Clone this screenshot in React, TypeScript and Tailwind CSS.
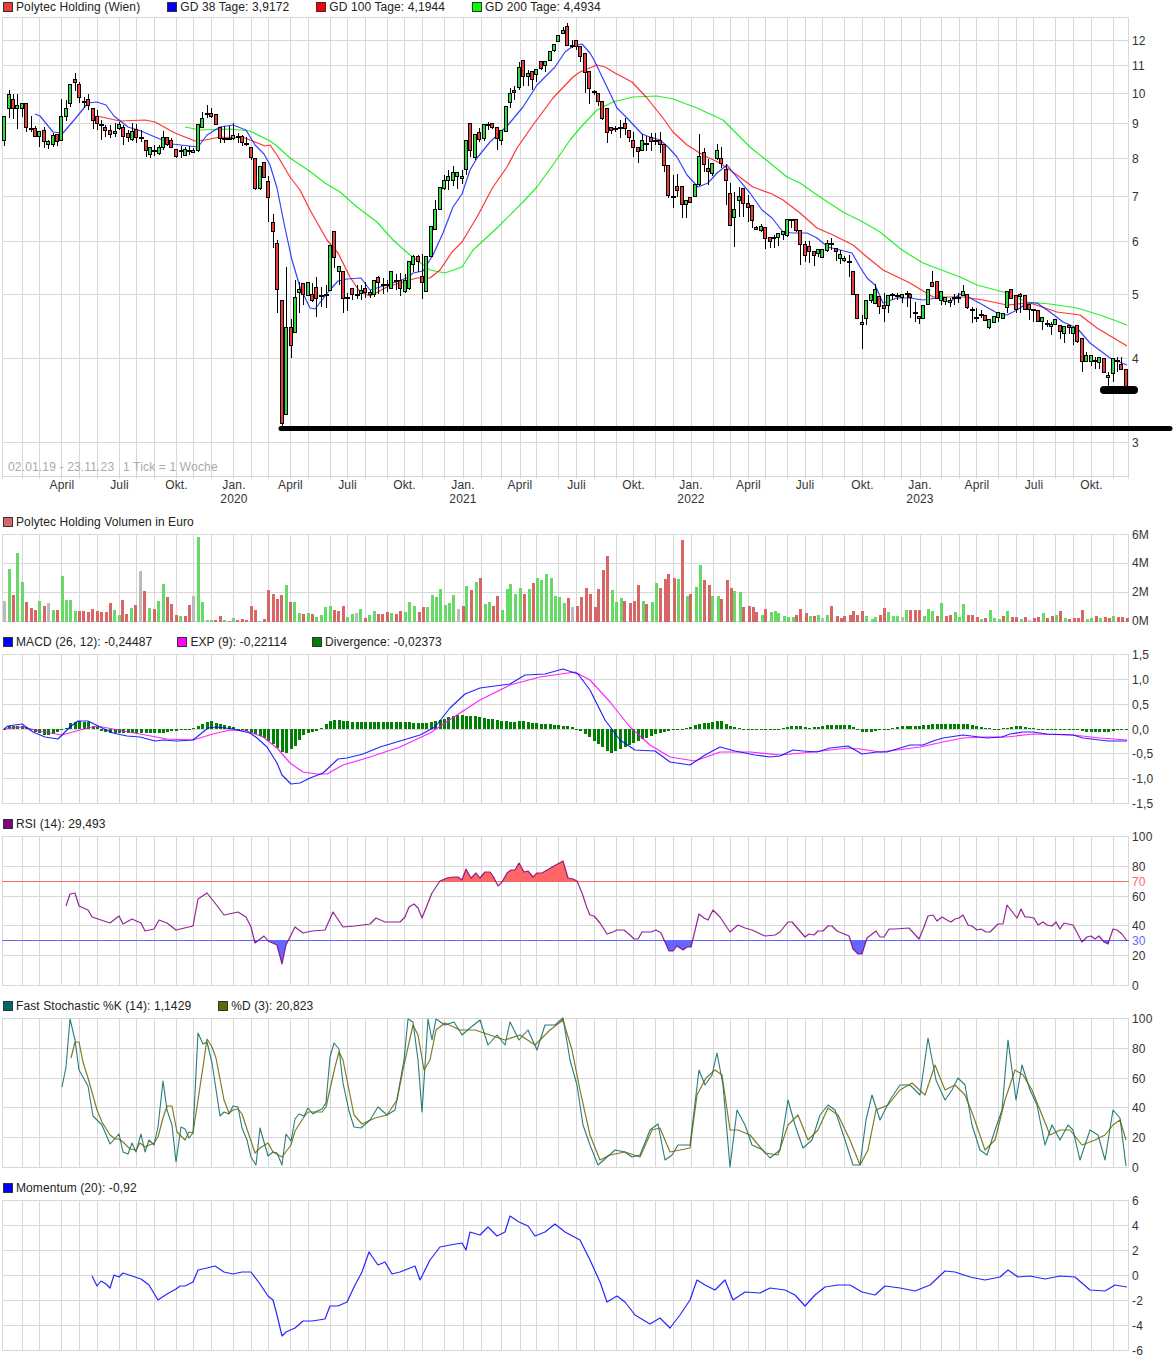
import React from "react";

type Candle = [number, number, number, number, number, number];
type Bar = [number, number, number];

const GRID_X = [
  2.5, 22.5, 39.5, 61.5, 79.5, 97.5, 119.5, 136.5, 154.5, 176.5, 193.5, 211.5, 233.5, 251.5, 268.5, 290.5, 308.5, 330.5,
  347.5, 365.5, 387.5, 404.5, 422.5, 444.5, 463.5, 481.5, 501.5, 520.5, 536.5, 558.5, 576.5, 594.5, 616.5, 633.5, 655.5,
  673.5, 691.5, 713.5, 730.5, 748.5, 765.5, 787.5, 805.5, 822.5, 844.5, 862.5, 884.5, 901.5, 920.5, 941.5, 959.5, 976.5,
  998.5, 1016.5, 1033.5, 1055.5, 1073.5, 1091.5, 1113.5, 1128.5,
];

const MONTHS: [number, string, string?][] = [
  [62, "April"], [119.5, "Juli"], [176.5, "Okt."], [234, "Jan.", "2020"], [290.5, "April"], [347.5, "Juli"], [404.5, "Okt."],
  [463, "Jan.", "2021"], [520, "April"], [576.5, "Juli"], [633.5, "Okt."], [691, "Jan.", "2022"], [748.5, "April"], [805, "Juli"],
  [862.5, "Okt."], [920, "Jan.", "2023"], [977, "April"], [1034, "Juli"], [1091.5, "Okt."],
];

// x, body top, body bottom, high, low, green?
const CANDLES: Candle[] = [
  [4,116,140,116,146,1],[9,94,108,90,118,1],[13,99,108,94,119,0],[17,105,108,94,129,1],[22,103,108,103,117,1],[26,103,127,103,132,0],
  [31,128,128,116,132,0],[35,128,136,126,136,0],[39,131,136,131,147,1],[44,130,141,127,148,0],[48,141,144,140,149,1],[53,135,144,133,147,1],
  [57,134,141,134,146,0],[61,116,140,99,141,1],[66,108,116,100,121,1],[70,84,103,84,107,1],[75,79,82,73,91,0],[79,84,97,82,103,0],
  [84,101,101,97,108,0],[88,99,105,94,110,0],[93,108,120,108,129,0],[97,116,123,110,130,0],[101,124,124,120,140,0],[105,127,130,125,137,0],
  [110,130,134,125,138,0],[115,131,133,123,137,1],[119,124,128,122,130,1],[123,127,136,125,145,0],[128,133,137,130,142,0],[132,131,139,123,141,1],
  [136,129,137,124,143,0],[141,137,137,130,142,0],[146,140,150,140,157,0],[150,147,154,147,158,1],[154,150,150,145,156,0],[159,147,153,145,155,1],
  [163,137,147,131,150,1],[167,137,144,137,146,0],[171,140,147,138,147,0],[176,149,156,149,158,0],[181,150,150,146,158,0],[185,149,155,147,156,1],
  [189,150,150,146,155,0],[193,150,152,148,153,1],[198,124,150,124,152,1],[202,118,127,112,127,1],[207,113,113,105,118,0],[211,113,116,108,118,0],
  [216,114,124,114,125,0],[220,127,138,127,143,0],[224,138,138,126,143,0],[229,138,138,126,139,0],[233,135,138,123,140,1],[238,136,136,133,143,0],
  [242,136,142,135,146,0],[246,143,143,137,146,0],[251,147,157,147,160,0],[255,158,188,158,190,0],[260,166,188,166,190,1],[264,162,177,162,177,0],
  [268,181,197,176,222,0],[273,222,231,214,248,0],[277,243,289,240,313,0],[282,300,423,300,426,0],[286,327,414,267,414,1],[291,327,345,319,358,0],
  [295,297,332,280,332,1],[299,289,292,282,313,1],[303,283,294,283,305,0],[308,282,295,282,295,1],[312,294,300,283,302,0],[316,287,298,277,317,0],
  [321,295,295,287,307,0],[326,294,294,285,308,0],[330,245,290,245,290,1],[334,231,257,231,268,0],[339,266,271,266,285,1],[343,271,298,271,313,0],
  [347,297,297,293,311,0],[352,288,294,288,300,0],[357,294,294,285,299,0],[361,290,293,285,300,1],[365,288,292,282,298,0],[370,292,294,290,298,1],
  [374,280,294,280,297,1],[378,277,282,276,294,0],[383,284,284,278,294,0],[387,284,284,280,292,0],[391,271,288,271,288,1],[396,280,280,274,290,0],
  [400,280,288,273,296,0],[405,280,291,274,293,1],[409,261,288,261,290,1],[413,256,264,255,272,1],[418,256,261,255,272,0],[422,276,282,254,299,0],
  [426,256,291,256,291,1],[431,226,256,226,256,1],[435,209,229,200,229,1],[440,187,209,187,209,1],[444,180,188,175,190,1],[448,176,180,170,190,1],
  [453,172,180,166,186,1],[457,172,176,172,189,1],[462,176,178,170,184,1],[466,140,169,140,175,1],[470,123,150,123,157,0],[475,134,157,134,160,1],
  [479,132,139,128,142,0],[484,124,138,124,141,1],[488,124,124,122,130,0],[492,123,127,123,129,0],[497,127,138,127,150,0],[501,130,140,130,145,1],
  [506,106,131,106,131,1],[510,93,102,88,108,1],[514,90,92,86,100,0],[519,67,87,62,90,1],[523,60,76,60,86,0],[528,73,76,70,86,1],
  [532,71,79,71,90,0],[536,69,74,69,82,1],[541,61,68,61,70,0],[545,61,65,61,72,1],[550,51,60,51,61,1],[554,44,50,44,52,1],
  [558,35,41,35,42,1],[563,30,33,27,34,1],[567,26,45,23,45,0],[572,45,45,40,48,0],[576,40,46,40,50,0],[580,46,56,46,62,0],
  [585,53,72,53,93,0],[589,71,88,71,104,0],[594,91,91,90,95,0],[598,93,101,93,106,0],[602,101,118,101,120,0],[607,108,132,108,143,0],
  [611,127,130,127,134,0],[615,128,128,126,132,0],[620,127,127,120,138,0],[625,123,128,118,135,0],[629,130,137,130,142,0],[633,140,147,132,157,0],
  [638,147,151,147,163,0],[642,140,150,134,151,1],[646,143,143,136,151,0],[651,137,141,133,151,0],[655,140,140,133,145,0],[660,140,144,132,153,0],
  [664,144,165,144,172,0],[668,165,195,165,198,0],[673,196,196,175,208,0],[677,186,190,174,197,0],[682,186,204,186,218,0],[686,200,204,200,218,1],
  [690,197,202,197,203,0],[695,184,196,184,196,1],[699,156,184,134,186,1],[704,152,164,148,172,0],[708,168,171,159,185,0],[712,163,173,163,176,1],
  [717,150,158,144,160,1],[721,158,163,147,168,0],[726,169,180,164,205,0],[730,193,225,183,225,0],[734,209,217,192,247,1],[739,196,200,187,217,1],
  [743,188,203,188,217,0],[748,203,207,195,222,0],[752,205,220,205,228,0],[756,227,229,226,230,0],[761,226,230,224,232,1],[765,227,238,227,249,0],
  [770,237,241,237,248,0],[774,237,238,235,248,1],[778,233,237,233,246,1],[783,231,234,231,240,1],[787,219,235,219,237,1],[791,219,219,219,228,0],
  [796,219,230,219,232,0],[800,230,244,230,265,0],[805,244,255,241,262,0],[809,246,251,241,263,0],[814,251,255,251,266,0],[818,249,253,249,257,1],
  [822,249,257,249,258,1],[827,243,250,240,252,1],[831,243,243,238,250,0],[836,248,251,248,261,0],[840,254,258,250,264,1],[844,258,260,256,262,1],
  [849,261,261,255,277,0],[853,271,294,271,295,0],[857,294,318,294,319,0],[862,322,324,315,349,1],[866,300,318,300,325,1],[871,294,300,294,303,1],
  [875,289,303,284,303,1],[879,296,306,296,314,0],[884,305,308,293,322,0],[888,295,305,295,313,1],[892,294,294,293,300,0],[897,295,295,293,300,0],
  [902,294,297,294,303,1],[907,293,293,291,307,0],[910,294,297,293,318,0],[915,312,312,302,322,0],[919,316,318,316,324,0],[923,305,318,305,318,1],
  [928,289,304,289,304,1],[932,282,286,271,286,0],[937,281,298,281,298,0],[941,291,300,291,305,1],[945,297,301,297,305,1],[950,300,302,298,307,1],
  [954,297,297,294,305,0],[958,297,297,293,303,0],[963,291,295,285,295,1],[967,294,307,294,309,0],[972,309,309,307,323,0],[976,317,317,308,322,0],
  [981,314,314,310,318,0],[985,315,320,315,320,0],[989,319,327,319,329,1],[994,316,322,316,322,1],[998,312,317,312,322,1],[1003,313,318,313,318,1],
  [1007,291,307,291,313,1],[1011,289,298,289,298,0],[1016,295,309,295,313,0],[1020,294,296,293,313,0],[1025,295,309,295,309,0],[1029,304,309,304,320,0],
  [1033,309,309,309,322,0],[1038,310,321,310,321,0],[1042,317,321,317,330,1],[1047,323,323,320,327,0],[1051,324,326,322,335,1],[1055,319,324,319,324,1],
  [1060,325,331,325,339,0],[1064,326,333,326,343,1],[1069,325,327,325,334,0],[1073,327,333,327,345,1],[1077,325,341,325,343,0],[1082,338,361,338,372,0],
  [1086,355,361,352,361,1],[1091,355,361,355,366,1],[1095,360,360,357,369,0],[1099,357,362,357,369,1],[1104,358,372,358,373,0],[1108,375,377,372,386,1],
  [1113,358,373,358,382,1],[1117,360,360,357,372,0],[1121,364,369,357,370,0],[1126,369,387,369,387,0],
];

// x, height, colour (0 red, 1 green, 2 grey)
const VOLUME: Bar[] = [
  [4,21,2],[9,53,1],[13,27,0],[17,69,1],[22,40,1],[26,20,0],[31,14,0],[35,12,0],[39,21,1],[44,16,0],[48,19,2],[53,12,1],[57,12,0],[62,46,1],[66,22,1],
  [70,22,1],[75,11,1],[79,11,0],[83,11,0],[88,10,0],[92,13,0],[97,11,0],[101,10,0],[106,10,0],[110,19,0],[114,12,1],[119,7,1],[122,22,0],[126,8,0],
  [131,14,1],[135,17,0],[140,51,2],[144,31,0],[149,14,1],[154,13,0],[158,21,1],[163,38,1],[167,25,0],[171,18,0],[176,7,0],[180,6,1],[185,6,0],[189,17,0],
  [193,26,2],[198,85,1],[202,20,1],[207,2,1],[211,2,1],[215,2,0],[220,6,0],[224,2,1],[229,1,0],[233,4,1],[237,2,0],[242,3,0],[246,2,0],[251,16,0],[255,12,0],
  [259,1,1],[264,3,0],[268,32,0],[273,28,0],[277,23,0],[281,27,0],[286,37,1],[290,20,0],[294,20,1],[299,9,1],[303,8,0],[308,9,1],[312,8,0],[316,5,1],[321,7,1],
  [325,15,1],[330,16,1],[334,12,0],[338,11,0],[343,16,0],[347,5,1],[352,8,1],[356,9,2],[360,13,1],[365,4,0],[369,7,1],[374,11,1],[378,8,0],[382,8,0],[387,10,0],
  [391,9,1],[396,8,0],[400,11,0],[405,10,1],[409,20,1],[414,16,1],[419,10,0],[423,15,0],[427,15,1],[432,27,1],[436,25,1],[440,33,1],[445,17,1],[449,19,1],
  [453,27,1],[458,13,2],[463,16,0],[466,36,1],[471,32,0],[476,40,1],[480,44,0],[485,18,1],[489,20,1],[493,16,0],[497,26,0],[502,12,1],[507,33,1],[510,38,1],
  [515,28,1],[520,34,1],[524,28,0],[529,33,1],[533,39,0],[537,44,1],[541,42,1],[546,48,1],[551,44,1],[555,26,1],[559,25,1],[564,19,1],[568,24,0],[572,15,2],
  [577,16,0],[581,25,0],[586,34,0],[590,28,0],[595,15,0],[598,33,0],[603,52,0],[607,66,0],[612,32,1],[616,20,1],[621,24,1],[624,21,0],[630,19,0],[634,21,0],
  [638,37,0],[643,21,1],[646,18,0],[652,20,1],[656,39,1],[660,34,0],[665,43,0],[668,48,0],[674,44,0],[678,43,1],[682,82,0],[687,26,1],[690,28,0],[696,35,1],
  [700,57,1],[704,42,0],[709,37,0],[712,26,1],[718,26,1],[721,23,0],[727,42,0],[731,34,0],[734,31,1],[740,30,1],[743,15,0],[749,16,0],[753,15,0],[756,10,0],
  [762,7,1],[765,13,0],[771,10,1],[775,11,1],[778,9,1],[784,6,1],[788,5,1],[793,5,1],[796,7,0],[800,13,0],[806,9,0],[810,6,1],[814,6,0],[818,7,1],[822,4,2],
  [827,7,1],[831,16,0],[837,6,0],[841,4,0],[844,6,0],[850,7,0],[853,11,0],[857,7,0],[862,11,0],[866,6,1],[872,3,1],[875,5,1],[880,7,0],[884,14,0],[888,10,1],
  [893,6,1],[897,6,1],[902,5,2],[906,12,1],[910,12,0],[915,12,0],[919,12,0],[924,6,1],[928,13,1],[932,11,1],[937,6,0],[941,19,1],[946,6,0],[950,7,0],[955,10,1],
  [959,5,1],[963,18,1],[968,7,0],[972,7,0],[977,5,0],[981,3,1],[985,4,0],[990,12,1],[994,4,1],[999,3,1],[1003,6,0],[1007,11,1],[1012,5,0],[1016,5,0],[1021,3,1],
  [1025,5,0],[1029,2,2],[1034,4,0],[1038,5,0],[1043,9,1],[1047,4,0],[1052,6,0],[1056,7,1],[1060,11,0],[1065,4,1],[1069,3,0],[1074,4,0],[1078,4,0],[1082,12,0],
  [1087,3,1],[1091,4,1],[1096,6,0],[1100,4,1],[1105,5,0],[1109,4,0],[1113,6,1],[1118,5,0],[1122,5,0],[1127,4,0],
];

const VOLUME_FILL = ["#d96666", "#66d966", "#bbbbbb"];

// divergence height at x, filled in between by straight lines
const DIVERGENCE: [number, number][] = [
  [4,0],[8,3],[20,3],[26,2],[31,-1],[35,-3],[44,-6],[53,-5],[57,-3],[62,-1],[66,1],[70,6],[79,8],[88,7],[92,3],[97,2],[101,-2],[110,-4],[165,-4],[170,-2],
  [190,-1],[198,3],[207,7],[211,8],[220,5],[233,2],[242,-1],[255,-5],[264,-9],[273,-15],[281,-23],[286,-24],[294,-18],[303,-6],[316,-2],[321,1],[330,8],
  [338,9],[350,7],[400,7],[425,6],[440,9],[455,14],[475,13],[495,9],[510,7],[520,8],[535,6],[565,3],[575,1],[585,-5],[600,-16],[610,-24],[625,-18],[640,-11],
  [655,-5],[670,-2],[685,1],[700,5],[720,8],[730,3],[745,-1],[770,-1],[780,0],[790,3],[800,3],[810,1],[830,4],[850,4],[855,1],[862,-3],[872,-3],[880,0],[890,0],
  [900,3],[915,3],[935,5],[965,5],[975,3],[985,1],[1000,0],[1010,2],[1020,3],[1030,1],[1045,0],[1078,0],[1085,-3],[1110,-3],[1115,-1],[1127,0],
];

const GD38 = "35,114 40,116 53,132 63,133 75,119 88,103 97,102 106,105 114,116 128,127 141,131 155,137 172,144 198,147 207,135 220,127 233,125 246,130 255,145 264,154 270,165 277,188 285,228 292,260 300,287 310,308 315,309 329,291 338,281 347,279 361,278 370,290 387,285 407,278 413,273 423,271 433,255 443,233 453,207 462,194 470,170 477,158 490,142 508,125 523,107 537,85 555,67 565,52 573,46 582,44 590,53 594,60 607,87 617,108 627,118 642,134 650,137 660,140 668,147 677,157 687,175 698,187 708,183 717,173 727,165 735,175 750,193 762,210 772,218 783,232 793,233 807,233 817,238 828,247 840,250 852,253 860,267 867,278 875,285 883,303 897,298 910,298 923,300 937,298 950,302 960,294 970,298 983,305 997,313 1007,315 1017,310 1027,303 1037,303 1050,312 1063,322 1077,328 1090,343 1110,358 1127,365";
const GD100 = "97,116 120,121 145,120 155,122 175,133 195,141 205,140 220,137 245,138 265,146 270,145 277,155 290,177 300,190 310,210 327,240 338,253 350,277 360,292 370,296 387,287 403,282 417,278 430,278 440,270 452,252 462,242 477,217 493,187 507,167 517,148 533,125 553,98 573,77 580,72 597,65 605,67 615,73 632,82 647,98 663,118 673,132 687,145 703,155 720,163 737,175 753,187 772,194 783,200 800,213 817,228 833,235 853,245 867,257 883,270 910,283 933,297 963,297 983,300 1007,305 1030,303 1057,312 1080,315 1097,328 1127,346";
const GD200 = "185,127 200,130 230,129 250,131 270,141 277,146 290,158 308,170 325,183 340,192 357,207 377,222 393,240 410,255 430,270 445,273 462,267 473,250 497,228 523,202 537,187 555,162 570,140 580,128 597,110 613,102 633,97 657,96 673,99 697,108 723,120 750,147 770,163 787,177 800,183 820,197 843,212 863,222 880,232 902,250 923,263 960,277 977,285 1007,293 1027,302 1050,304 1077,308 1103,316 1127,325";

const MACD = "4,729 8,726 22,724 33,732 45,737 58,739 70,727 78,721 88,721 100,727 113,733 127,736 140,737 155,741 163,740 177,741 193,740 208,728 217,727 233,729 250,733 257,738 267,747 277,763 282,775 291,784 300,783 310,778 323,773 338,759 347,758 363,754 380,747 400,741 420,735 435,727 450,708 465,694 480,688 495,686 510,684 525,675 545,674 563,669 578,674 590,690 605,720 620,740 635,750 655,751 670,762 690,765 705,755 720,747 735,751 755,755 770,757 780,756 793,750 803,751 817,752 830,748 848,746 862,754 877,752 887,752 910,745 923,745 933,741 943,738 963,735 987,738 1002,737 1010,734 1023,732 1033,732 1047,734 1073,735 1083,738 1108,741 1127,741";
const EXP = "4,729 22,727 40,731 62,735 80,730 97,726 113,729 140,734 167,739 193,740 213,734 230,730 247,731 263,737 277,748 290,763 303,772 317,774 327,774 343,765 367,758 400,747 430,733 460,713 480,700 510,685 540,677 575,672 590,680 610,702 630,727 650,745 670,757 695,761 720,752 750,752 780,755 813,752 847,748 860,749 880,752 897,750 920,747 943,742 963,738 987,737 1007,737 1033,734 1073,735 1100,738 1127,740";

const RSI = "66,906 70,894 75,893 79,906 88,910 92,917 101,920 110,923 119,916 123,924 132,919 141,923 145,931 154,929 159,920 167,923 176,930 193,926 198,899 207,893 215,903 224,915 238,912 246,917 251,927 255,943 264,936 268,941 277,945 282,964 286,945 295,927 303,933 312,931 325,930 333,912 343,927 355,926 370,924 376,918 385,922 400,922 405,917 409,907 414,904 418,908 422,918 432,893 440,881 447,878 453,877 458,877 462,880 466,869 471,878 476,873 480,878 485,872 490,872 493,876 498,886 502,882 507,873 511,870 515,870 519,863 524,872 528,871 533,877 537,873 542,873 554,866 563,861 568,878 573,879 577,881 582,893 587,908 590,915 594,916 600,923 607,934 613,932 617,930 624,930 630,935 634,939 638,939 642,932 651,932 656,930 661,933 669,951 673,951 677,946 683,950 687,947 691,947 699,914 704,918 708,920 713,910 720,917 730,932 738,925 745,928 752,930 765,936 775,935 780,932 788,922 792,922 805,937 809,934 814,935 818,931 823,931 828,926 832,926 837,931 849,936 853,949 858,954 862,954 867,938 876,931 880,937 884,937 889,929 895,929 909,928 919,939 924,927 928,916 933,915 937,921 942,917 947,920 951,922 955,919 959,918 963,915 968,925 972,926 977,930 981,929 986,932 990,932 998,924 1003,924 1007,905 1017,918 1021,909 1025,917 1029,917 1034,918 1038,925 1043,922 1047,925 1052,926 1056,922 1060,929 1064,923 1073,925 1082,942 1087,937 1091,936 1095,939 1099,936 1104,942 1108,944 1113,929 1117,930 1122,934 1127,941";

const STOCH_K = "62,1087 66,1067 70,1019 75,1040 79,1070 88,1086 93,1116 102,1125 110,1144 119,1134 123,1152 128,1154 132,1143 136,1152 141,1134 145,1152 149,1140 154,1145 158,1127 163,1081 167,1110 172,1125 176,1162 181,1127 185,1129 189,1138 193,1133 198,1033 203,1044 207,1042 212,1063 220,1116 224,1112 229,1114 233,1106 238,1107 242,1128 247,1140 251,1157 256,1165 260,1128 268,1156 273,1152 277,1153 282,1165 286,1134 291,1141 295,1119 299,1114 304,1116 308,1108 313,1114 317,1111 322,1109 326,1103 330,1057 334,1043 339,1049 343,1083 349,1111 354,1127 361,1128 370,1120 378,1107 387,1115 395,1110 404,1060 408,1019 413,1022 418,1060 422,1112 428,1019 432,1040 436,1019 445,1025 454,1022 462,1035 470,1028 480,1020 488,1045 497,1035 505,1045 510,1022 519,1040 528,1030 537,1050 545,1025 555,1025 563,1018 570,1060 577,1085 583,1125 590,1145 598,1165 606,1158 615,1150 625,1152 632,1157 640,1155 650,1130 658,1124 665,1160 672,1155 678,1145 690,1145 699,1070 705,1085 712,1075 717,1053 723,1085 730,1167 737,1110 745,1125 752,1145 763,1150 770,1158 780,1150 788,1100 795,1125 803,1148 812,1140 820,1115 828,1105 835,1110 845,1140 853,1165 860,1165 866,1120 872,1095 880,1120 890,1100 900,1085 910,1085 920,1095 928,1038 936,1080 945,1100 952,1090 958,1078 965,1085 972,1125 980,1150 987,1155 995,1130 1002,1110 1008,1040 1016,1100 1022,1065 1030,1090 1037,1105 1045,1145 1052,1125 1060,1140 1068,1125 1073,1130 1080,1160 1090,1130 1098,1135 1105,1160 1113,1110 1120,1118 1126,1166";
const STOCH_D = "71,1058 75,1042 79,1042 83,1062 88,1078 97,1110 102,1122 110,1135 115,1139 119,1139 123,1142 130,1149 136,1150 140,1143 145,1147 154,1143 158,1137 163,1118 167,1106 172,1106 177,1132 185,1140 189,1132 193,1133 203,1067 207,1039 212,1047 216,1058 224,1100 229,1113 233,1110 238,1109 242,1114 255,1153 260,1148 268,1143 273,1152 282,1157 291,1145 295,1131 304,1117 308,1112 322,1112 326,1107 335,1067 339,1052 343,1060 349,1090 354,1115 362,1124 375,1118 387,1115 397,1100 404,1065 413,1025 418,1035 424,1070 430,1060 436,1030 445,1023 460,1030 475,1030 490,1035 505,1040 520,1035 535,1045 550,1030 563,1020 572,1050 580,1090 590,1135 600,1160 610,1155 625,1152 640,1157 652,1130 660,1128 670,1152 680,1150 690,1148 697,1095 706,1078 715,1070 722,1075 730,1130 738,1130 750,1135 765,1153 778,1155 788,1125 798,1115 808,1140 818,1130 828,1108 838,1115 850,1140 860,1165 868,1150 876,1110 888,1105 900,1090 912,1083 925,1095 935,1065 945,1090 955,1085 965,1095 973,1115 985,1150 995,1140 1005,1100 1015,1070 1023,1075 1032,1090 1040,1110 1050,1135 1060,1130 1070,1130 1082,1145 1095,1140 1105,1135 1113,1125 1120,1120 1126,1140";

const MOMENTUM = "92,1276 97,1286 101,1281 106,1284 110,1288 114,1275 119,1277 123,1273 132,1276 141,1279 149,1285 158,1300 167,1294 176,1289 180,1286 185,1286 193,1282 198,1270 207,1268 215,1266 224,1272 233,1274 242,1272 251,1272 260,1284 268,1296 273,1300 277,1315 282,1336 286,1332 295,1328 303,1321 312,1321 325,1319 330,1306 338,1306 347,1302 355,1285 362,1272 369,1252 378,1265 385,1262 392,1274 400,1272 415,1266 420,1280 430,1260 440,1247 450,1245 462,1243 466,1250 470,1232 480,1235 488,1227 497,1236 505,1232 510,1216 519,1222 528,1226 535,1236 545,1232 555,1224 565,1232 580,1240 590,1260 600,1282 607,1302 617,1296 625,1302 635,1315 650,1324 660,1318 670,1328 680,1315 690,1300 697,1280 705,1285 715,1290 725,1280 733,1300 745,1292 760,1293 770,1288 785,1290 795,1295 805,1306 815,1295 825,1287 838,1285 850,1285 862,1292 875,1295 885,1286 900,1288 915,1291 930,1285 945,1271 955,1272 970,1277 985,1280 1000,1277 1008,1270 1018,1277 1030,1276 1045,1279 1060,1276 1075,1277 1090,1290 1105,1291 1115,1285 1127,1287";

function divergenceAt(x: number) {
  for (let i = 1; i < DIVERGENCE.length; i++) {
    const [x0, h0] = DIVERGENCE[i - 1];
    const [x1, h1] = DIVERGENCE[i];
    if (x <= x1) return Math.round(h0 + ((h1 - h0) * (x - x0)) / (x1 - x0));
  }
  return 0;
}

function Legend({ items, className = "pt-px gap-[27px]" }: { items: [string, string][]; className?: string }) {
  return (
    <div className={`flex h-[14px] items-center whitespace-nowrap pl-[3px] leading-none tracking-[0.1px] text-[#222] ${className}`}>
      {items.map(([swatch, label]) => (
        <div key={label} className="flex items-center gap-[3px]">
          <span className={`h-[10px] w-[10px] border border-[#333] ${swatch}`} />
          <span>{label}</span>
        </div>
      ))}
    </div>
  );
}

// every chart draws in page coordinates, the viewBox cuts out its own band
function Chart({
  top,
  height,
  lines,
  ticks,
  tickBelow = 0,
  children,
}: {
  top: number;
  height: number;
  lines: number[];
  ticks: [number, string][];
  tickBelow?: number;
  children: React.ReactNode;
}) {
  const first = lines[0];
  const last = lines[lines.length - 1];
  return (
    <svg width={1175} height={height} viewBox={`0 ${top} 1175 ${height}`} className="block">
      <g stroke="#d8d8d8" strokeWidth={1} shapeRendering="crispEdges">
        {lines.map((y) => (
          <line key={y} x1={2} x2={1129} y1={y} y2={y} />
        ))}
        {GRID_X.map((x) => (
          <line key={x} x1={x} x2={x} y1={first} y2={last + tickBelow} />
        ))}
      </g>
      {children}
      {ticks.map(([y, label]) => (
        <text key={label} x={1132} y={y + 5} className="fill-[#333]">
          {label}
        </text>
      ))}
    </svg>
  );
}

function Line({ points, color, width = 1.2, opacity = 0.85 }: { points: string; color: string; width?: number; opacity?: number }) {
  return <polyline points={points} fill="none" stroke={color} strokeWidth={width} strokeOpacity={opacity} strokeLinejoin="round" />;
}

function CandleMark({ c }: { c: Candle }) {
  const [x, top, bot, hi, lo, green] = c;
  return (
    <g shapeRendering="crispEdges">
      <rect x={x - 0.5} y={hi} width={1} height={lo - hi} fill="#000" />
      {top === bot ? (
        <rect x={x - 2} y={top - 0.5} width={5} height={2} fill="#000" />
      ) : (
        <rect x={x - 1.5} y={top + 0.5} width={3} height={bot - top} fill={green ? "#2fdc3f" : "#ee3b3b"} stroke="#000" strokeWidth={1} />
      )}
    </g>
  );
}

export default function App() {
  return (
    <div className="h-[1361px] w-[1175px] overflow-hidden bg-white font-['Liberation_Sans',Arial,sans-serif] text-xs tracking-[0.16px]">
      <Legend
        className="gap-[27px]"
        items={[
          ["bg-[#ee3b3b]", "Polytec Holding (Wien)"],
          ["bg-[#0000ff]", "GD 38 Tage: 3,9172"],
          ["bg-[#ff0000]", "GD 100 Tage: 4,1944"],
          ["bg-[#00ff00]", "GD 200 Tage: 4,4934"],
        ]}
      />
      <Chart
        top={14}
        height={500}
        lines={[17.5, 40.5, 65.5, 93.5, 123.5, 158.5, 196.5, 241.5, 294.5, 358.5, 442.5, 476.5]}
        tickBelow={2}
        ticks={[[40, "12"], [65, "11"], [93, "10"], [123, "9"], [158, "8"], [196, "7"], [241, "6"], [294, "5"], [358, "4"], [442, "3"]]}
      >
        <Line points={GD200} color="#00ee00" />
        <Line points={GD100} color="#ff1111" />
        <Line points={GD38} color="#1122ff" />
        {CANDLES.map((c) => (
          <CandleMark key={c[0]} c={c} />
        ))}
        <line x1={281} x2={1170} y1={428.5} y2={428.5} stroke="#000" strokeWidth={5} strokeLinecap="round" />
        <line x1={1104} x2={1134} y1={390} y2={390} stroke="#000" strokeWidth={8} strokeLinecap="round" />
        <text x={8} y={471} className="fill-[#aaa]">02.01.19 - 23.11.23</text>
        <text x={123} y={471} className="fill-[#aaa]">1 Tick = 1 Woche</text>
        {MONTHS.map(([x, month, year]) => (
          <g key={x} textAnchor="middle" className="fill-[#333]">
            <text x={x} y={489}>{month}</text>
            {year && <text x={x} y={503}>{year}</text>}
          </g>
        ))}
      </Chart>

      <Legend items={[["bg-[#d96666]", "Polytec Holding Volumen in Euro"]]} />
      <Chart
        top={528}
        height={106}
        lines={[534.5, 563.5, 592.5, 621.5]}
        ticks={[[534, "6M"], [562, "4M"], [591, "2M"], [620, "0M"]]}
      >
        {VOLUME.map(([x, h, c]) => (
          <rect key={x} x={x - 1} y={622 - h} width={3} height={h} fill={VOLUME_FILL[c]} shapeRendering="crispEdges" />
        ))}
      </Chart>

      <Legend
        className="pt-px gap-[25px]"
        items={[
          ["bg-[#0000ff]", "MACD (26, 12): -0,24487"],
          ["bg-[#ff00ff]", "EXP (9): -0,22114"],
          ["bg-[#008000]", "Divergence: -0,02373"],
        ]}
      />
      <Chart
        top={648}
        height={168}
        lines={[654.5, 679.5, 704.5, 729.5, 753.5, 778.5, 803.5]}
        ticks={[[654, "1,5"], [679, "1,0"], [704, "0,5"], [729, "0,0"], [753, "-0,5"], [778, "-1,0"], [803, "-1,5"]]}
      >
        {CANDLES.map(([x]) => {
          const h = divergenceAt(x);
          return (
            <rect
              key={x}
              x={x - 1}
              y={h > 0 ? 729 - h : 729}
              width={3}
              height={Math.max(Math.abs(h), 1)}
              fill="#008000"
              shapeRendering="crispEdges"
            />
          );
        })}
        <Line points={EXP} color="#ff00ff" />
        <Line points={MACD} color="#0000ff" />
      </Chart>

      <Legend items={[["bg-[#800080]", "RSI (14): 29,493"]]} />
      <Chart
        top={830}
        height={168}
        lines={[836.5, 866.5, 896.5, 925.5, 955.5, 985.5]}
        ticks={[[836, "100"], [866, "80"], [896, "60"], [925, "40"], [955, "20"], [985, "0"]]}
      >
        <defs>
          <clipPath id="rsi-over">
            <rect x={0} y={830} width={1175} height={51} />
          </clipPath>
          <clipPath id="rsi-under">
            <rect x={0} y={940} width={1175} height={58} />
          </clipPath>
        </defs>
        <polygon points={`${RSI} 1127,881 66,881`} fill="#ff6666" clipPath="url(#rsi-over)" />
        <polygon points={`${RSI} 1127,940 66,940`} fill="#6666ff" clipPath="url(#rsi-under)" />
        <line x1={2} x2={1129} y1={881.5} y2={881.5} stroke="#ff6666" shapeRendering="crispEdges" />
        <line x1={2} x2={1129} y1={940.5} y2={940.5} stroke="#6666ff" shapeRendering="crispEdges" />
        <Line points={RSI} color="#800080" />
        <text x={1132} y={886} className="fill-[#ff6666]">70</text>
        <text x={1132} y={945} className="fill-[#6666ff]">30</text>
      </Chart>

      <Legend
        items={[
          ["bg-[#006666]", "Fast Stochastic %K (14): 1,1429"],
          ["bg-[#666600]", "%D (3): 20,823"],
        ]}
      />
      <Chart
        top={1012}
        height={168}
        lines={[1018.5, 1048.5, 1078.5, 1107.5, 1137.5, 1167.5]}
        ticks={[[1018, "100"], [1048, "80"], [1078, "60"], [1107, "40"], [1137, "20"], [1167, "0"]]}
      >
        <Line points={STOCH_K} color="#006666" width={1.1} />
        <Line points={STOCH_D} color="#666600" />
      </Chart>

      <Legend items={[["bg-[#0000ff]", "Momentum (20): -0,92"]]} />
      <Chart
        top={1194}
        height={167}
        lines={[1200.5, 1225.5, 1250.5, 1275.5, 1300.5, 1325.5, 1350.5]}
        ticks={[[1200, "6"], [1225, "4"], [1250, "2"], [1275, "0"], [1300, "-2"], [1325, "-4"], [1350, "-6"]]}
      >
        <Line points={MOMENTUM} color="#0000ff" />
      </Chart>
    </div>
  );
}
